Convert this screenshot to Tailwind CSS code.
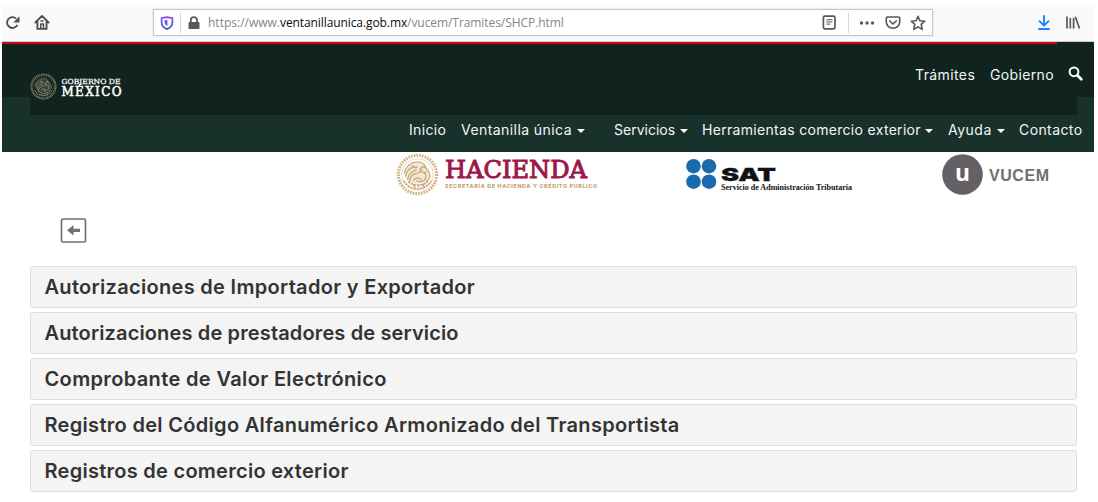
<!DOCTYPE html>
<html lang="es">
<head>
<meta charset="utf-8">
<title>VUCEM - SHCP</title>
<script src="https://cdn.jsdelivr.net/npm/@tailwindcss/browser@4"></script>
</head>
<body class="bg-white font-['Inter',sans-serif] overflow-hidden">
<svg class="hidden">
  <symbol id="seal" viewBox="0 0 42 42">
    <g fill="none" stroke="currentColor">
      <circle cx="21" cy="21" r="18.7" stroke-width="3.2" stroke-dasharray="1.7 1" opacity=".85"/>
      <circle cx="21" cy="21" r="15.4" stroke-width=".7" opacity=".6"/>
      <path d="M8 20c1-6 6-11 13-11 4 0 7 2 8 5-3-1-5 0-6 3M9 23c2-7 6-10 12-9M11 26c2-6 5-9 9-9M13 28c1-5 4-8 8-8l5-4M24 19c4-1 6 2 5 5-1 4-6 5-9 3M26 13c4 1 7 5 7 9 0 3-2 5-4 6M17 27c2-3 5-3 8-1M15 12l5 3M30 18l-3 2" stroke-width="1.2"/>
      <path d="M7.500 27c3 5 8 8 13.500 8s10.500-3 13.500-8M12 28c4 4 14 5 19 0M17 31l2 3M22 31v4M27 30l-1 4" stroke-width="1.500" stroke-dasharray="2.500 .6"/>
    </g>
    <path fill="currentColor" opacity=".28" d="M9 22c0-7 5-12 12-12 5 0 9 4 12 11-2 7-6 9-12 9S10 28 9 22z"/>
  </symbol>
</svg>

<div class="ml-[2px] mt-[5px] w-[1092px]">
  <!-- Browser toolbar -->
  <div class="flex h-[37px] items-start border-b border-[#cccccc] bg-[#f9f9f9] text-[#4e4e50]">
    <svg class="ml-[3px] mt-[10px] h-4 w-4" viewBox="0 0 16 16" fill="none" stroke="currentColor" stroke-width="1.9"><path d="M11.200 3.600A5.400 5.400 0 1 0 12.400 9.800"/><path d="M14.500 1.200v6.200H8.300z" fill="currentColor" stroke="none"/></svg>
    <svg class="ml-[13px] mt-[9px] h-[17px] w-[17px]" viewBox="0 0 16 16" fill="none" stroke="currentColor" stroke-width="1.8" stroke-linejoin="round" stroke-linecap="round"><path d="M1.300 8 7.500 1.800 13.700 8M3.200 7.500V14h8.600V7.500"/><path d="M6.300 13V9.500h2.600V13" stroke-width="1.400"/><path d="M6.500 6.500h2" stroke-width="1.400"/></svg>
    <div class="ml-[102px] mt-1 flex h-[27px] w-[780px] items-center border border-[#c6c6c6] bg-white shadow-[0_0_1px_#bbb]">
      <svg class="ml-[6px] h-[14px] w-[14px]" viewBox="0 0 14 14"><defs><linearGradient id="sh" x1="0" x2="0" y1="0" y2="1"><stop stop-color="#8a4bf0"/><stop offset="1" stop-color="#3358c8"/></linearGradient></defs><path d="M7 1.100 12.400 2.200v4c0 3.500-2 5.600-5.400 6.900-3.400-1.300-5.400-3.400-5.400-6.900v-4z" fill="none" stroke="url(#sh)" stroke-width="1.700" stroke-linejoin="round"/><path d="M7.400 3.800v6.200C5.500 9 4.500 7.800 4.500 6V4.300z" fill="url(#sh)"/></svg>
      <div class="ml-[6px] h-5 w-px bg-[#d7d7db]"></div>
      <svg class="ml-[6px] h-[14px] w-[14px]" viewBox="0 0 14 14"><path d="M3.800 7V4.200a3.100 3.100 0 0 1 6.200 0V7" fill="none" stroke="#58585a" stroke-width="1.800"/><rect x="1.500" y="6" width="11" height="7" rx="1" fill="#58585a"/></svg>
      <div class="ml-[7px] w-[614px] whitespace-nowrap font-['Open_Sans',sans-serif] text-[12px] leading-[18px] text-[#85858a]"><span>https://www.</span><span class="tracking-[-0.09px] text-[#0c0c0d]">ventanillaunica.gob.mx</span><span class="tracking-[-0.07px]">/vucem/Tramites/SHCP.html</span></div>
      <svg class="h-[15px] w-[14px]" viewBox="0 0 14 15" fill="none" stroke="#58585a"><rect x="1.400" y="1.200" width="11.600" height="12.600" rx="1.500" stroke-width="1.700"/><path d="M4.400 4.700h6M4.400 6.900h6M4.400 9.100h4" stroke-width="1"/></svg>
      <div class="ml-[12px] h-5 w-px bg-[#d7d7db]"></div>
      <svg class="ml-[10px] h-4 w-[16px]" viewBox="0 0 16 16" fill="#58585a"><circle cx="2.500" cy="8" r="1.700"/><circle cx="8" cy="8" r="1.700"/><circle cx="13.500" cy="8" r="1.700"/></svg>
      <svg class="ml-[10px] h-[14px] w-4" viewBox="0 0 16 14" fill="none" stroke="#58585a" stroke-linejoin="round" stroke-linecap="round"><path d="M2.300 1h11.400q1 0 1 1v4a6.700 6.300 0 0 1-13.400 0V2q0-1 1-1z" stroke-width="1.600"/><path d="m4.800 5 3.200 3 3.200-3" stroke-width="1.700"/></svg>
      <svg class="ml-[9px] h-4 w-4" viewBox="0 0 16 16" fill="none" stroke="#58585a" stroke-width="1.600" stroke-linejoin="round"><path d="m8 1.300 1.900 4.400 4.900.5-3.600 3.200 1 5L8 11.900l-4.200 2.500 1-5L1.200 6.200l4.900-.5z"/></svg>
    </div>
    <svg class="ml-[105px] mt-[10px] h-4 w-[12px]" viewBox="0 0 12 16" fill="none" stroke="#1a84ff" stroke-width="1.900" stroke-linecap="round" stroke-linejoin="round"><path d="M6 1v9.500M1.500 6.200 6 10.700l4.500-4.500M1 14h10"/></svg>
    <svg class="ml-[15px] mt-[10px] h-4 w-4" viewBox="0 0 16 16" stroke="#58585a" stroke-width="1.700"><path d="M2 1.500v12M5.300 3v10.500M8.600 3v10.500M10.300 1.700l4.200 11.800"/></svg>
  </div>

  <!-- Site header -->
  <header class="flex h-[110px] flex-col bg-linear-to-b from-[#10231e] from-[55px] to-[#18322b] to-[55px] text-[14px] text-[#f4f6f5]">
    <div class="h-[2px] w-[1055px] bg-[#d0021b]"></div>
    <div class="mx-[28px] flex h-[71px] w-[1047px] shrink-0 items-start bg-[#10231e]">
      <svg class="mt-[29px] h-[28px] w-[95px] shrink-0" viewBox="0 0 95 28">
        <use href="#seal" x="0" y="0" width="27" height="27" class="text-[#9a9178]"/>
        <g fill="#fff" font-family="DejaVu Serif, serif" font-weight="700">
          <text x="31.500" y="10.500" font-size="7" font-weight="400" stroke="#fff" stroke-width=".25" textLength="59" lengthAdjust="spacingAndGlyphs">GOBIERNO DE</text>
          <text x="31.500" y="23" font-size="12" font-weight="400" stroke="#fff" stroke-width=".5" textLength="60" lengthAdjust="spacing">MÉXICO</text>
        </g>
      </svg>
      <div class="ml-[790px] mt-[21px] flex shrink-0 whitespace-nowrap leading-5">
        <a class="w-[75px] tracking-[0.4px]">Trámites</a>
        <a class="w-[78px] tracking-[0.36px]">Gobierno</a>
        <svg class="mt-[1px] h-[15px] w-[15px]" viewBox="0 0 15 15" fill="none" stroke="#fff"><circle cx="6" cy="5.800" r="4.400" stroke-width="2"/><path d="m9.300 9.200 4 4" stroke-width="2.800" stroke-linecap="round"/></svg>
      </div>
    </div>
    <nav class="ml-[407px] mt-[5px] flex whitespace-nowrap leading-5">
      <a class="w-[52px] tracking-[0.35px]">Inicio</a>
      <a class="flex w-[153px] items-center tracking-[0.43px]">Ventanilla única<i class="ml-[5px] mt-px border-x-4 border-t-4 border-x-transparent border-t-white"></i></a>
      <a class="flex w-[88px] items-center">Servicios<i class="ml-[5px] mt-px border-x-4 border-t-4 border-x-transparent border-t-white"></i></a>
      <a class="flex w-[246px] items-center tracking-[0.31px]">Herramientas comercio exterior<i class="ml-[4px] mt-px border-x-4 border-t-4 border-x-transparent border-t-white"></i></a>
      <a class="flex w-[71px] items-center tracking-[0.5px]">Ayuda<i class="ml-[5px] mt-px border-x-4 border-t-4 border-x-transparent border-t-white"></i></a>
      <a class="tracking-[0.4px]">Contacto</a>
    </nav>
  </header>

  <!-- Institution logos -->
  <div class="flex h-[46px] pl-[394px]">
    <svg class="h-[46px] w-[204px]" viewBox="0 0 204 46">
      <use href="#seal" x="0" y="1" width="43" height="43" class="text-[#c9a874]"/>
      <text x="49" y="25.700" font-family="DejaVu Serif, serif" font-size="23.500" fill="#9d1747" stroke="#9d1747" stroke-width="1" textLength="142" lengthAdjust="spacingAndGlyphs">HACIENDA</text>
      <text x="49" y="36.200" font-family="Inter, sans-serif" font-weight="800" font-size="5.300" fill="#c5a26f" textLength="152" lengthAdjust="spacing">SECRETARÍA DE HACIENDA Y CRÉDITO PÚBLICO</text>
    </svg>
    <svg class="ml-[85px] h-[46px] w-[172px]" viewBox="0 0 172 46">
      <g fill="#1a6bad"><circle cx="8.500" cy="14.200" r="7.300"/><circle cx="24" cy="14.200" r="7.300"/><circle cx="8.500" cy="29.700" r="7.300"/><circle cx="24" cy="29.700" r="7.300"/></g>
      <text x="36" y="28.500" font-family="Inter, sans-serif" font-weight="900" font-size="18" fill="#111" stroke="#111" stroke-width=".3" textLength="55" lengthAdjust="spacingAndGlyphs">SAT</text>
      <text x="36" y="37.500" font-family="Liberation Serif, serif" font-weight="700" font-size="7.800" fill="#111" textLength="131" lengthAdjust="spacingAndGlyphs">Servicio de Administración Tributaria</text>
    </svg>
    <svg class="ml-[84px] h-[46px] w-[112px]" viewBox="0 0 112 46">
      <circle cx="21.500" cy="22.500" r="20.300" fill="#636166"/>
      <text x="14" y="29" font-family="Open Sans, sans-serif" font-weight="700" font-size="23" fill="#fff" textLength="15" lengthAdjust="spacingAndGlyphs">u</text>
      <text x="48" y="29.300" font-family="Liberation Sans, sans-serif" font-weight="700" font-size="16" fill="#6f6e73" textLength="60" lengthAdjust="spacing">VUCEM</text>
    </svg>
  </div>

  <main class="pl-[28px]">
    <svg class="ml-[30px] mt-[20px] h-[25px] w-[27px]" viewBox="0 0 27 25"><rect x="1.500" y="1" width="24" height="23" rx="1.500" fill="#fff" stroke="#6f7272" stroke-width="1.700"/><path d="M7 12.300 13.500 7.200v3.500H20v3.200h-6.500v3.500z" fill="#6f7272"/></svg>
    <div class="mt-[23px] flex w-[1047px] flex-col gap-1 text-[20px] font-semibold leading-[41px] text-[#333]">
      <div class="h-[42px] rounded-[3px] border border-[#dedede] bg-[#f4f4f4] pl-[13.5px] tracking-[0.31px]">Autorizaciones de Importador y Exportador</div>
      <div class="h-[42px] rounded-[3px] border border-[#dedede] bg-[#f4f4f4] pl-[13.5px] tracking-[0.14px]">Autorizaciones de prestadores de servicio</div>
      <div class="h-[42px] rounded-[3px] border border-[#dedede] bg-[#f4f4f4] pl-[13.5px] tracking-[0.36px]">Comprobante de Valor Electrónico</div>
      <div class="h-[42px] rounded-[3px] border border-[#dedede] bg-[#f4f4f4] pl-[13.5px] tracking-[0.31px]">Registro del Código Alfanumérico Armonizado del Transportista</div>
      <div class="h-[42px] rounded-[3px] border border-[#dedede] bg-[#f4f4f4] pl-[13.5px] tracking-[0.27px]">Registros de comercio exterior</div>
    </div>
  </main>
</div>
</body>
</html>
